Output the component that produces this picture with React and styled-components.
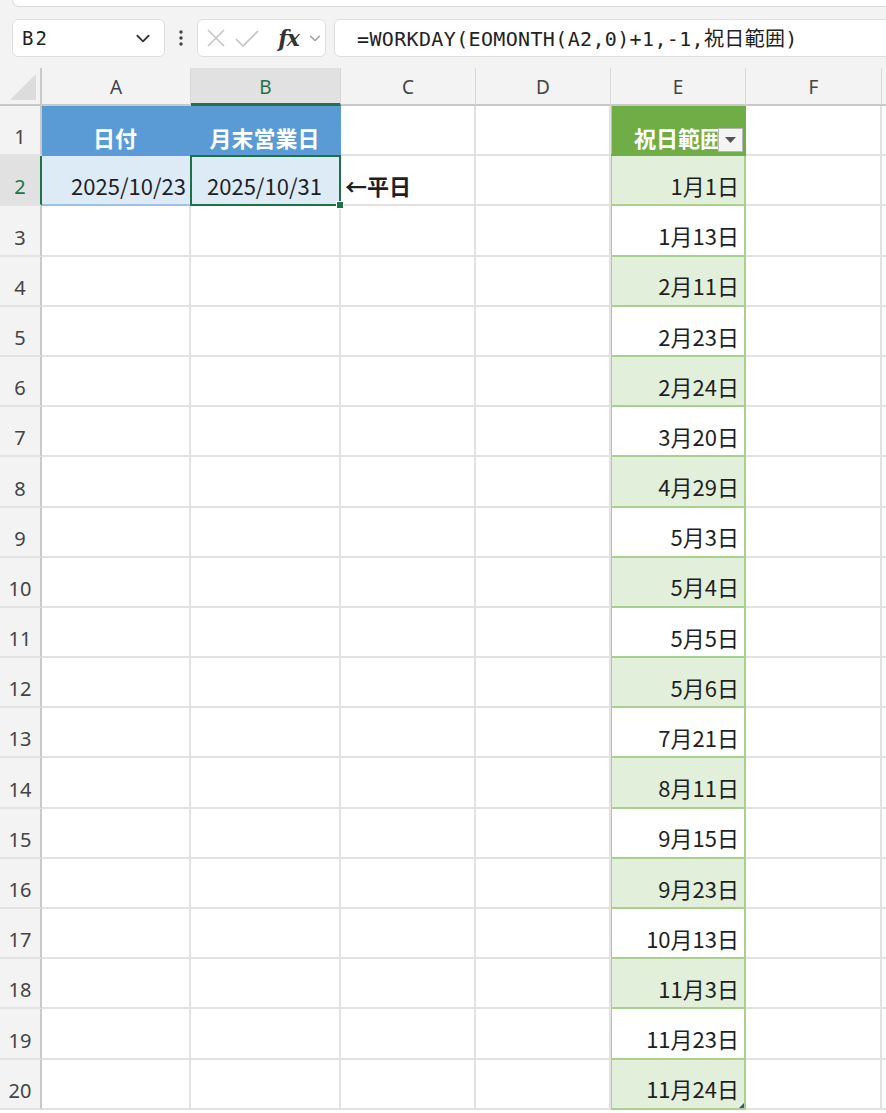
import React from 'react';
import styled, { createGlobalStyle } from 'styled-components';

const Global = createGlobalStyle`
  html, body { margin: 0; padding: 0; background: #fff; }
  body { font-family: "Noto Sans", "Noto Sans CJK JP", sans-serif; overflow: hidden; }
  * { box-sizing: border-box; }
`;

const Page = styled.div`
  width: 886px;
  height: 1113px;
  overflow: hidden;
  background: #fff;
  display: flex;
  flex-direction: column;
`;

const Ribbon = styled.div`
  height: 7px;
  background: #f3f3f3;
  padding-left: 12px;
  display: flex;
`;

const RibbonPanel = styled.div`
  flex: 1;
  background: #fff;
  border: 1px solid #dcdcdc;
  border-top: none;
  border-right: none;
  border-radius: 0 0 0 9px;
`;

const FormulaBar = styled.div`
  height: 61px;
  background: #f3f3f3;
  display: flex;
  align-items: center;
  padding-left: 12px;
`;

const Box = styled.div`
  height: 38px;
  background: #fff;
  border: 1px solid #dedede;
  border-radius: 6px;
  display: flex;
  align-items: center;
`;

const NameBox = styled(Box)`
  width: 153px;
  padding: 0 12px 0 9px;
  justify-content: space-between;
  font-family: "DejaVu Sans Mono", monospace;
  font-size: 19px;
  letter-spacing: 2px;
  color: #222;
`;

const Dots = styled.div`
  width: 32px;
  display: flex;
  justify-content: center;
  color: #444;
`;

const FuncBox = styled(Box)`
  width: 129px;
  padding: 0 3px 0 8px;
  justify-content: space-between;
`;

const Fx = styled.span`
  font-family: "DejaVu Serif", "Liberation Serif", serif;
  font-style: italic;
  font-weight: bold;
  font-size: 22px;
  color: #333;
  letter-spacing: -1px;
  margin-left: 10px;
`;

const FormulaBox = styled(Box)`
  flex: 1;
  margin-left: 8px;
  margin-right: -12px;
  padding-left: 22px;
  font-family: "DejaVu Sans Mono", "Noto Sans CJK JP", monospace;
  font-size: 20px;
  letter-spacing: 0.35px;
  color: #222;
  white-space: nowrap;
`;

const Sheet = styled.div`
  display: grid;
  grid-template-columns: 42px 149px 150px 135px 135px 135px 136px 1fr;
  grid-template-rows: 38px repeat(20, 50.2px);
`;

const Corner = styled.div`
  background: #f3f3f3;
  border-right: 2px solid #c9c9c9;
  border-bottom: 2px solid #c9c9c9;
  display: flex;
  align-items: flex-end;
  justify-content: flex-end;
  padding: 0 4px 4px 0;
`;

const ColHeader = styled.div`
  background: ${(p) => (p.$selected ? '#e1e1e1' : '#f3f3f3')};
  border-right: 1px solid #d8d8d8;
  border-bottom: ${(p) => (p.$selected ? '3px solid #217346' : '2px solid #c9c9c9')};
  display: flex;
  align-items: center;
  justify-content: center;
  padding-top: 2px;
  font-size: 19px;
  color: ${(p) => (p.$selected ? '#217346' : '#444')};
`;

const RowHeader = styled.div`
  background: ${(p) => (p.$selected ? '#e1e1e1' : '#f3f3f3')};
  border-right: ${(p) => (p.$selected ? '2px solid #217346' : '2px solid #c9c9c9')};
  border-bottom: 2px solid #e2e2e2;
  display: flex;
  align-items: flex-end;
  justify-content: center;
  padding-bottom: 7px;
  font-size: 20px;
  line-height: 1;
  color: ${(p) => (p.$selected ? '#217346' : '#444')};
`;

const variants = {
  plain: { bg: '#fff', br: '#e2e2e2', bb: '#e2e2e2', color: '#1f1f1f' },
  blueHead: { bg: '#5b9bd5', br: '#5b9bd5', bb: '#5b9bd5', color: '#fff' },
  blueRow: { bg: '#ddebf7', br: '#ddebf7', bb: '#9bc2e6', color: '#1f1f1f' },
  greenHead: { bg: '#70ad47', br: '#70ad47', bb: '#70ad47', color: '#fff' },
  greenBand: { bg: '#e2efda', br: '#a9d08e', bb: '#a9d08e', color: '#1f1f1f' },
  greenRow: { bg: '#fff', br: '#a9d08e', bb: '#a9d08e', color: '#1f1f1f' },
};

const Cell = styled.div`
  position: relative;
  z-index: ${(p) => (p.$active ? 2 : 'auto')};
  background: ${(p) => variants[p.$v].bg};
  border-right: 2px solid ${(p) => variants[p.$v].br};
  border-bottom: 2px solid ${(p) => variants[p.$v].bb};
  box-shadow: ${(p) => (p.$greenLeft ? 'inset 1px 0 0 #a9d08e' : 'none')};
  display: flex;
  align-items: flex-end;
  justify-content: ${(p) => p.$align || 'flex-end'};
  padding: 0 ${(p) => p.$pr || 5}px ${(p) => (p.$head ? 4 : 6)}px 4px;
  font-family: "Noto Sans CJK JP", sans-serif;
  font-size: 22px;
  line-height: 1.2;
  font-weight: ${(p) => (p.$bold ? 700 : 400)};
  color: ${(p) => variants[p.$v].color};
  white-space: nowrap;
  overflow: ${(p) => (p.$clip ? 'hidden' : 'visible')};
`;

const Selection = styled.div`
  position: absolute;
  left: -1px;
  top: -1px;
  right: -2px;
  bottom: -2px;
  border: 2px solid #1e7145;
  pointer-events: none;
`;

const FillHandle = styled.div`
  position: absolute;
  right: -5px;
  bottom: -5px;
  width: 8px;
  height: 8px;
  background: #1e7145;
  border: 1px solid #fff;
`;

const FilterButton = styled.div`
  position: absolute;
  right: 1px;
  bottom: 2px;
  width: 25px;
  height: 24px;
  background: #f4f4f4;
  border: 1px solid #b5b5b5;
  display: flex;
  align-items: center;
  justify-content: center;
`;

const ResizeHandle = styled.div`
  position: absolute;
  right: 0;
  bottom: 0;
  width: 0;
  height: 0;
  border-left: 5px solid transparent;
  border-bottom: 5px solid #2f5597;
`;

const holidays = [
  '1月1日', '1月13日', '2月11日', '2月23日', '2月24日', '3月20日', '4月29日',
  '5月3日', '5月4日', '5月5日', '5月6日', '7月21日', '8月11日', '9月15日',
  '9月23日', '10月13日', '11月3日', '11月23日', '11月24日',
];

const cols = ['A', 'B', 'C', 'D', 'E', 'F'];

function Chevron({ color = '#444', size = 14 }) {
  return (
    <svg width={size} height={size} viewBox="0 0 16 16" fill="none">
      <path d="M3 6l5 5 5-5" stroke={color} strokeWidth="1.6" strokeLinecap="round" strokeLinejoin="round" />
    </svg>
  );
}

export default function App() {
  const rows = [];
  for (let r = 1; r <= 20; r++) {
    const cells = [];
    cells.push(
      <RowHeader key={`h${r}`} $selected={r === 2}>
        {r}
      </RowHeader>
    );
    for (let c = 0; c < 7; c++) {
      const key = `${r}-${c}`;
      if (r === 1 && c === 0) {
        cells.push(<Cell key={key} $v="blueHead" $align="center" $bold $head>日付</Cell>);
      } else if (r === 1 && c === 1) {
        cells.push(<Cell key={key} $v="blueHead" $align="center" $bold $head>月末営業日</Cell>);
      } else if (r === 2 && c === 0) {
        cells.push(<Cell key={key} $v="blueRow" $pr={3}>2025/10/23</Cell>);
      } else if (r === 2 && c === 1) {
        cells.push(
          <Cell key={key} $v="blueRow" $align="center" $active>
            2025/10/31
            <Selection />
            <FillHandle />
          </Cell>
        );
      } else if (r === 2 && c === 2) {
        cells.push(<Cell key={key} $v="plain" $align="flex-start" $bold>←平日</Cell>);
      } else if (c === 4) {
        if (r === 1) {
          cells.push(
            <Cell key={key} $v="greenHead" $bold $head $greenLeft $clip $pr={22}>
              祝日範囲
              <FilterButton>
                <svg width="11" height="6" viewBox="0 0 11 6">
                  <path d="M0 0h11L5.5 6z" fill="#555" />
                </svg>
              </FilterButton>
            </Cell>
          );
        } else {
          cells.push(
            <Cell key={key} $v={r % 2 === 0 ? 'greenBand' : 'greenRow'} $greenLeft>
              {holidays[r - 2]}
              {r === 20 && <ResizeHandle />}
            </Cell>
          );
        }
      } else {
        cells.push(<Cell key={key} $v="plain" />);
      }
    }
    rows.push(<React.Fragment key={r}>{cells}</React.Fragment>);
  }

  return (
    <Page>
      <Global />
      <Ribbon>
        <RibbonPanel />
      </Ribbon>
      <FormulaBar>
        <NameBox>
          <span>B2</span>
          <Chevron color="#333" size={18} />
        </NameBox>
        <Dots>
          <svg width="4" height="16" viewBox="0 0 4 16">
            <circle cx="2" cy="2" r="1.7" fill="#444" />
            <circle cx="2" cy="8" r="1.7" fill="#444" />
            <circle cx="2" cy="14" r="1.7" fill="#444" />
          </svg>
        </Dots>
        <FuncBox>
          <svg width="20" height="20" viewBox="0 0 20 20">
            <path d="M2 2l16 16M18 2L2 18" stroke="#c4c4c4" strokeWidth="1.6" />
          </svg>
          <svg width="24" height="20" viewBox="0 0 24 20">
            <path d="M1 11l7 7L23 3" stroke="#c4c4c4" strokeWidth="1.6" fill="none" />
          </svg>
          <Fx>fx</Fx>
          <Chevron color="#999" size={14} />
        </FuncBox>
        <FormulaBox>=WORKDAY(EOMONTH(A2,0)+1,-1,祝日範囲)</FormulaBox>
      </FormulaBar>
      <Sheet>
        <Corner>
          <svg width="26" height="26" viewBox="0 0 26 26">
            <path d="M26 0V26H0z" fill="#dcdcdc" />
          </svg>
        </Corner>
        {cols.map((c) => (
          <ColHeader key={c} $selected={c === 'B'}>
            {c}
          </ColHeader>
        ))}
        <ColHeader />
        {rows}
      </Sheet>
    </Page>
  );
}
